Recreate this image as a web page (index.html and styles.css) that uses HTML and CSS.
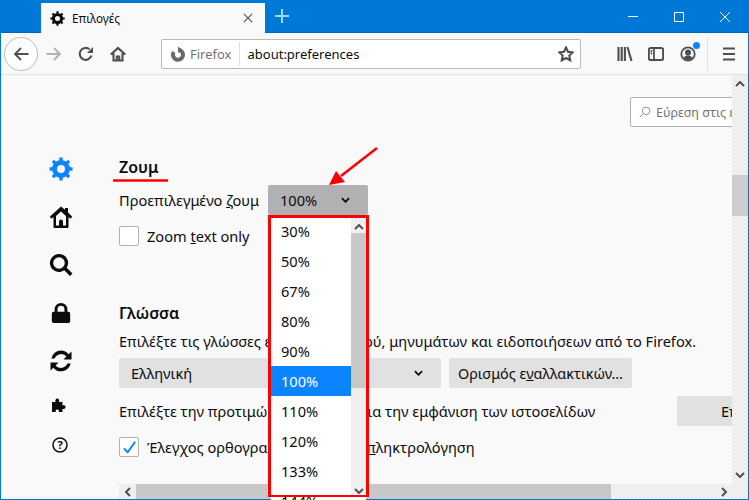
FILE: index.html
```html
<!DOCTYPE html>
<html lang="el">
<head>
<meta charset="utf-8">
<title>Επιλογές</title>
<link rel="stylesheet" href="styles.css">
</head>
<body>
<div class="window">
  <header class="titlebar">
    <div class="tab">
      <svg class="tab-icon" viewBox="0 0 24 24"><use href="#gear"/></svg>
      <span class="tab-title">Επιλογές</span>
      <svg class="tab-close" viewBox="0 0 12 12"><path d="M1 1l10 10M11 1L1 11"/></svg>
    </div>
    <svg class="newtab" viewBox="0 0 14 14"><path d="M7 0v14M0 7h14"/></svg>
    <div class="win-controls">
      <svg viewBox="0 0 10 10"><path d="M0 4.500h10"/></svg>
      <svg viewBox="0 0 10 10"><path d="M.5.5h9v9h-9z"/></svg>
      <svg viewBox="0 0 10 10"><path d="M0 0l10 10M10 0L0 10"/></svg>
    </div>
  </header>

  <nav class="toolbar">
    <div class="back">
      <svg class="ti" viewBox="0 0 16 16"><path class="st" d="M15.500 8H1.500M8 2L2 8l6 6"/></svg>
    </div>
    <svg class="ti forward" viewBox="0 0 16 16"><path class="st" d="M.5 8h14M8 2l6 6-6 6"/></svg>
    <svg class="ti reload" viewBox="0 0 16 16"><path class="st st-bold" d="M13.500 9.500A6 6 0 1 1 11.500 3.200"/><path class="fl" d="M15 1v6H9z"/></svg>
    <svg class="ti home" viewBox="0 0 16 16"><path class="st st-bold" d="M.8 8.500L8 2l7.200 6.500M3.500 7v7.500h9V7M6.800 14.500v-4h2.400v4"/></svg>
    <div class="urlbar">
      <svg class="ff" viewBox="0 0 16 16"><path class="ff-ring" d="M9.500 4A5 5 0 1 1 3.800 6"/><path class="fl" d="M8 .5l4.500 3.500L8 7z"/></svg>
      <span class="ff-label">Firefox</span>
      <span class="url">about:preferences</span>
      <svg class="star" viewBox="0 0 16 16"><path class="st st-bold" d="M8 1.500l2 4.300 4.700.6-3.400 3.200.9 4.700L8 12l-4.200 2.300.9-4.700L1.300 6.400 6 5.800z"/></svg>
    </div>
    <svg class="ti library" viewBox="0 0 16 16"><path class="st st-bold" d="M1.500 1v14M4.700 1v14M7.900 1v14M10.500 1l4 14"/></svg>
    <svg class="ti sidebar-ic" viewBox="0 0 16 16"><rect class="st st-bold" x=".8" y="2" width="14.400" height="12" rx="2"/><path class="st" d="M6 2v12M2.700 5h1.500M2.700 7.500h1.500"/></svg>
    <div class="account">
      <svg class="ti" viewBox="0 0 16 16"><circle class="st" cx="8" cy="8" r="6.700"/><circle class="fl" cx="8" cy="6.500" r="3"/><path class="fl" d="M3.500 12c1-2 3-2.500 4.500-2.500s3.500.5 4.500 2.500A6 6 0 0 1 8 14a6 6 0 0 1-4.500-2z"/></svg>
      <span class="badge"></span>
    </div>
    <span class="tb-sep"></span>
    <svg class="ti menu" viewBox="0 0 16 16"><path class="st st-bold" d="M2 2.500h12M2 8h12M2 13.500h12"/></svg>
  </nav>

  <div class="content">
    <aside class="categories">
      <div class="cat"><svg class="cat-lg blue" viewBox="0 0 24 24"><use href="#gear"/></svg></div>
      <div class="cat"><svg class="cat-lg" viewBox="0 0 24 24"><path d="M12 1.500L.7 11.800l1.900 2 1.900-1.700V22a1 1 0 0 0 1 1h13a1 1 0 0 0 1-1V12.100l1.900 1.700 1.900-2L19 7.500V3h-3v1.700zM7 11l5-4.500 5 4.500v9.500h-3v-4a2 2 0 0 0-4 0v4H7z"/></svg></div>
      <div class="cat"><svg class="cat-lg" viewBox="0 0 24 24"><path d="M10 1a9 9 0 1 0 5.200 16.300l5.800 5.800 2.500-2.500-5.800-5.800A9 9 0 0 0 10 1zm0 3.200a5.800 5.800 0 1 1 0 11.600 5.800 5.800 0 0 1 0-11.600z"/></svg></div>
      <div class="cat"><svg class="cat-lg lock" viewBox="0 0 24 24"><path d="M12 1a7 7 0 0 0-7 7v2.500H4a2 2 0 0 0-2 2V21a2 2 0 0 0 2 2h16a2 2 0 0 0 2-2v-8.500a2 2 0 0 0-2-2h-1V8a7 7 0 0 0-7-7zm0 3.200A3.800 3.800 0 0 1 15.800 8v2.500H8.200V8A3.800 3.800 0 0 1 12 4.200z"/></svg></div>
      <div class="cat"><svg class="cat-lg" viewBox="0 0 24 24"><path d="M12 1.500a10 10 0 0 0-9.700 8h3.300A7 7 0 0 1 17.400 7.500L14.500 10.500H22.500V2.500l-2.800 2.800A10 10 0 0 0 12 1.500zM1.500 13.500v8l2.800-2.800A10 10 0 0 0 21.700 14.500h-3.300A7 7 0 0 1 6.600 16.500l2.900-3z"/></svg></div>
      <div class="cat cat-small"><svg class="cat-sm puzzle" viewBox="0 0 16 16"><path d="M1 5h3.500C4 3.500 4.500 1.500 6.300 1.500S8.500 3.500 8 5h3.500v3.500c1.500-.5 3-.2 3 1.600s-1.500 2.100-3 1.600V15H7.800c.5-1.500 0-2.500-1.500-2.500S4.300 13.500 4.800 15H1z"/></svg></div>
      <div class="cat cat-small"><svg class="cat-sm" viewBox="0 0 16 16"><circle cx="8" cy="8" r="7" fill="none" stroke="#0c0c0d" stroke-width="1.500"/><text x="8" y="12" text-anchor="middle" class="q">?</text></svg></div>
    </aside>

    <div class="pane">
      <div class="viewport-row">
        <main class="viewport">
          <div class="prefs">
            <div class="search">
              <svg viewBox="0 0 16 16"><circle cx="9.500" cy="6.500" r="5"/><path d="M6 10l-5 5"/></svg>
              <span>Εύρεση στις επιλογές</span>
            </div>
            <h2 class="title-zoom">Ζουμ</h2>
            <div class="row-zoom">
              <span class="label"><span>Προεπιλεγμένο </span><u>ζ</u>ουμ</span>
              <div class="select select-zoom">
                <span>100%</span>
                <svg class="chev" viewBox="0 0 10 6"><path d="M1 1l4 4 4-4"/></svg>
              </div>
            </div>
            <div class="row-check first-check">
              <span class="checkbox"></span>
              <span>Zoom <u>t</u>ext only</span>
            </div>
            <h2 class="title-lang">Γλώσσα</h2>
            <p class="desc">Επιλέξτε τις γλώσσες εμφάνισης μενού, μηνυμάτων και ειδοποιήσεων από το Firefox.</p>
            <div class="row-lang">
              <div class="select select-lang">
                <span>Ελληνική</span>
                <svg class="chev" viewBox="0 0 10 6"><path d="M1 1l4 4 4-4"/></svg>
              </div>
              <div class="button btn-alt"><span>Ορισμός ε<u>ν</u>αλλακτικών…</span></div>
            </div>
            <div class="row-pref">
              <span>Επιλέξτε την προτιμώμενη γλώσσα για την εμφάνιση των ιστοσελίδων</span>
              <div class="button btn-choose">Επιλογή…</div>
            </div>
            <div class="row-check second-check">
              <span class="checkbox checked">
                <svg viewBox="0 0 16 16"><path d="M2 9l4 4 8-11"/></svg>
              </span>
              <span>Έλεγχος ορθογραφίας κατά την <u>π</u>ληκτρολόγηση</span>
            </div>
          </div>
        </main>
        <div class="vscroll">
          <svg class="arrow" viewBox="0 0 10 6"><path d="M1 5l4-4 4 4"/></svg>
          <div class="vthumb"></div>
          <svg class="arrow arrow-end" viewBox="0 0 10 6"><path d="M1 1l4 4 4-4"/></svg>
        </div>
      </div>
      <div class="hscroll">
        <div class="hbtn"><svg class="arrow-h" viewBox="0 0 6 10"><path d="M5 1L1 5l4 4"/></svg></div>
        <div class="hthumb"></div>
        <div class="htrack"><svg class="arrow-h" viewBox="0 0 6 10"><path d="M1 1l4 4-4 4"/></svg></div>
        <div class="corner"></div>
      </div>
    </div>
  </div>

  <div class="popup">
    <ul class="options">
      <li>30%</li><li>50%</li><li>67%</li><li>80%</li><li>90%</li>
      <li class="active">100%</li><li>110%</li><li>120%</li><li>133%</li><li>144%</li>
    </ul>
    <div class="popup-scroll">
      <svg class="arrow" viewBox="0 0 10 6"><path d="M1 5l4-4 4 4"/></svg>
      <div class="popup-thumb"></div>
      <svg class="arrow arrow-end" viewBox="0 0 10 6"><path d="M1 1l4 4 4-4"/></svg>
    </div>
  </div>
  <div class="popup-frame"></div>

  <svg class="annot" viewBox="0 0 749 500">
    <path d="M113 180.500h55" class="annot-line"/>
    <path d="M377 148L341 176" class="annot-line"/>
    <path d="M329 185l7-14 9 11z" class="annot-head"/>
  </svg>

  <svg class="defs" viewBox="0 0 24 24">
    <defs>
      <g id="gear">
        <circle cx="12" cy="12" r="6.500" fill="none" stroke="currentColor" stroke-width="5"/>
        <g stroke="currentColor" stroke-width="3.400">
          <path d="M12 .5v4M12 19.500v4M.5 12h4M19.500 12h4M3.900 3.900l2.900 2.900M17.200 17.200l2.900 2.900M20.100 3.900l-2.900 2.900M6.800 17.200l-2.900 2.900"/>
        </g>
      </g>
    </defs>
  </svg>
</div>
</body>
</html>
```

FILE: styles.css
```css
* { box-sizing: border-box; }
html, body { margin: 0; padding: 0; }
body {
  width: 749px;
  height: 500px;
  overflow: hidden;
  font-family: "Noto Sans", "Open Sans", sans-serif;
  font-size: 14.6px;
  color: #0c0c0d;
}
.window {
  position: relative;
  width: 749px;
  height: 500px;
  display: flex;
  flex-direction: column;
  background: #0078d7;
  padding: 0 1px 1px 1px;
}
.defs { position: absolute; width: 0; height: 0; }

/* title bar */
.titlebar {
  height: 33px;
  flex: none;
  display: flex;
  align-items: flex-end;
  padding-left: 40px;
  border-bottom: 1px solid #0067b8;
}
.tab {
  width: 224px;
  height: 30px;
  margin-bottom: -1px;
  background: #f9f9fa;
  display: flex;
  align-items: center;
  padding-left: 9px;
  color: #0c0c0d;
}
.tab-icon { width: 15px; height: 15px; flex: none; }
.tab-title { font-size: 11.7px; margin-left: 7px; }
.tab-close { width: 10px; height: 10px; margin-left: auto; margin-right: 12px; fill: none; stroke: #5a5a5c; stroke-width: 1.500; }
.newtab { width: 14px; height: 14px; margin: 0 0 9px 10px; fill: none; stroke: #a9d7f5; stroke-width: 2; }
.win-controls {
  margin-left: auto;
  align-self: flex-start;
  display: flex;
  gap: 36px;
  padding: 12px 18px 0 0;
}
.win-controls svg { width: 10px; height: 10px; fill: none; stroke: #fff; stroke-width: 1; }

/* toolbar */
.toolbar {
  height: 42px;
  flex: none;
  background: #f9f9fa;
  border-bottom: 1px solid #e1e1e2;
  display: flex;
  align-items: center;
  padding: 1px 0 0 3px;
}
.ti { width: 16px; height: 16px; flex: none; }
.st { fill: none; stroke: #4f4f50; stroke-width: 1.800; }
.st-bold { stroke-width: 2.100; }
.fl { fill: #4f4f50; }
.back {
  width: 34px;
  height: 34px;
  border-radius: 50%;
  background: #fff;
  border: 1px solid #bcbcbd;
  display: flex;
  align-items: center;
  justify-content: center;
  flex: none;
}
.forward { margin-left: 8px; }
.forward .st { stroke: #b1b1b3; }
.reload { margin-left: 16px; }
.home { margin-left: 16px; }
.urlbar {
  width: 420px;
  height: 30px;
  margin-left: 35px;
  background: #fff;
  border: 1px solid #b9b9bb;
  border-radius: 2px;
  display: flex;
  align-items: center;
  padding-left: 8px;
  flex: none;
}
.ff { width: 16px; height: 16px; flex: none; }
.ff-ring { fill: none; stroke: #6a6a6c; stroke-width: 4; }
.ff .fl { fill: #6a6a6c; }
.ff-label {
  font-size: 13px;
  color: #737373;
  margin-left: 4px;
  padding-right: 7px;
  border-right: 1px solid #e1e1e2;
  line-height: 24px;
}
.url { font-size: 13px; margin-left: 8px; }
.star { width: 16px; height: 16px; margin-left: auto; margin-right: 6px; }
.library { margin-left: 36px; }
.sidebar-ic { margin-left: 15px; }
.account { position: relative; margin-left: 16px; width: 16px; height: 16px; flex: none; }
.badge {
  position: absolute;
  top: -4px;
  right: -4px;
  width: 7px;
  height: 7px;
  border-radius: 50%;
  background: #0a84ff;
}
.tb-sep { width: 1px; height: 34px; background: #e1e1e2; margin-left: 11px; flex: none; }
.menu { margin-left: 13px; }

/* content */
.content {
  flex: 1;
  min-height: 0;
  display: flex;
  background: #f9f9fa;
}
.categories {
  width: 118px;
  flex: none;
  padding: 70px 0 0 42px;
}
.cat {
  width: 36px;
  height: 48px;
  display: flex;
  align-items: center;
  justify-content: center;
}
.cat-small { height: 40px; margin-left: -1px; }
.cat-lg { width: 24px; height: 24px; fill: #0c0c0d; color: #0c0c0d; }
.cat-lg.blue { color: #0a84ff; }
.cat-lg.lock { width: 22px; height: 22px; margin-right: 1px; }
.cat-sm { width: 16px; height: 16px; fill: #0c0c0d; }
.puzzle { margin-right: 2px; }
.q { font-size: 11px; font-weight: 700; font-family: "Noto Sans", sans-serif; }

.pane { flex: 1; min-width: 0; display: flex; flex-direction: column; }
.viewport-row { flex: 1; min-height: 0; display: flex; }
.viewport { flex: 1; min-width: 0; overflow: hidden; }
.prefs { width: 720px; padding-top: 22px; }
.search {
  width: 220px;
  height: 30px;
  margin-left: 511px;
  background: #fff;
  border: 1px solid #b1b1b3;
  border-radius: 2px;
  display: flex;
  align-items: center;
  padding-left: 8px;
  font-size: 12.500px;
  color: #737373;
  white-space: nowrap;
}
.search svg { width: 12px; height: 12px; fill: none; stroke: #8f8f90; stroke-width: 1.300; margin-right: 5px; flex: none; }

h2 { margin: 0; font-size: 16px; font-weight: 600; line-height: 24px; }
.title-zoom { margin-top: 28px; }
.title-lang { margin-top: 55px; }
.row-zoom { display: flex; align-items: center; height: 30px; margin-top: 6px; }
.label { width: 149px; white-space: nowrap; }
.select {
  height: 30px;
  background: #e1e1e2;
  border-radius: 2px;
  display: flex;
  align-items: center;
  justify-content: space-between;
  flex: none;
}
.select-zoom { width: 100px; background: #b1b1b3; padding: 0 18px 0 12px; }
.select-lang { width: 322px; padding: 0 18px 0 12px; }
.chev { width: 9px; height: 6px; fill: none; stroke: #0c0c0d; stroke-width: 2; }

.row-check { display: flex; align-items: center; height: 20px; gap: 8px; }
.first-check { margin-top: 11px; }
.second-check { margin-top: 11px; }
.checkbox {
  width: 20px;
  height: 20px;
  background: #fff;
  border: 1px solid #b1b1b3;
  border-radius: 2px;
  flex: none;
  display: flex;
  align-items: center;
  justify-content: center;
}
.checkbox svg { width: 15px; height: 15px; fill: none; stroke: #0a84ff; stroke-width: 2; }
.desc { margin: 6px 0 0; line-height: 20px; white-space: nowrap; }
.row-lang { display: flex; gap: 8px; margin-top: 7px; }
.button {
  height: 30px;
  background: #e1e1e2;
  border-radius: 2px;
  display: flex;
  align-items: center;
  padding: 0 9px;
  flex: none;
  white-space: nowrap;
}
.btn-alt { width: 183px; }
.btn-alt span { font-size: 14.400px; }
.row-pref { display: flex; align-items: center; margin-top: 8px; white-space: nowrap; }
.btn-choose { margin-left: auto; width: 162px; padding-left: 44px; }

/* scrollbars */
.vscroll {
  width: 16px;
  flex: none;
  display: flex;
  flex-direction: column;
  align-items: center;
  background: repeating-conic-gradient(#f4f4f4 0 25%, #eaeaea 0 50%) 0 0 / 4px 4px;
}
.arrow { width: 10px; height: 6px; fill: none; stroke: #505050; stroke-width: 2; flex: none; margin-top: 6px; }
.arrow-end { margin-top: auto; margin-bottom: 6px; }
.vthumb { width: 16px; height: 41px; background: #cdcdcd; margin-top: 88px; }
.hscroll {
  height: 15px;
  flex: none;
  display: flex;
  background: repeating-conic-gradient(#f4f4f4 0 25%, #eaeaea 0 50%) 0 0 / 4px 4px;
}
.hbtn { width: 17px; display: flex; align-items: center; justify-content: center; }
.arrow-h { width: 6px; height: 10px; fill: none; stroke: #505050; stroke-width: 2; flex: none; }
.hthumb { width: 475px; background: #c8c8c8; }
.htrack { flex: 1; display: flex; align-items: center; justify-content: flex-end; padding-right: 5px; }
.corner { width: 16px; }

/* dropdown + annotation overlays */
.popup {
  position: absolute;
  left: 271px;
  top: 218px;
  width: 95px;
  height: 282px;
  background: #fff;
  display: flex;
  overflow: hidden;
}
.options { list-style: none; margin: -2px 0 0; padding: 0; flex: 1; }
.options li { height: 30px; line-height: 30px; padding-left: 10px; }
.options li.active { background: #0a84ff; color: #fff; }
.popup-scroll {
  width: 15px;
  height: 277px;
  flex: none;
  display: flex;
  flex-direction: column;
  align-items: center;
  background: repeating-conic-gradient(#f4f4f4 0 25%, #eaeaea 0 50%) 0 0 / 4px 4px;
}
.popup-scroll .arrow-end { margin-bottom: 1px; }
.popup-thumb { width: 15px; height: 155px; background: #c8c8c8; margin-top: 3px; }
.popup-frame {
  position: absolute;
  left: 268px;
  top: 215px;
  width: 101px;
  height: 282px;
  border: solid #f00;
  border-width: 3px 3px 2px;
  pointer-events: none;
}
.annot { position: absolute; left: 0; top: 0; width: 749px; height: 500px; pointer-events: none; }
.annot-line { fill: none; stroke: #f00; stroke-width: 2.500; }
.annot-head { fill: #f00; }
```
